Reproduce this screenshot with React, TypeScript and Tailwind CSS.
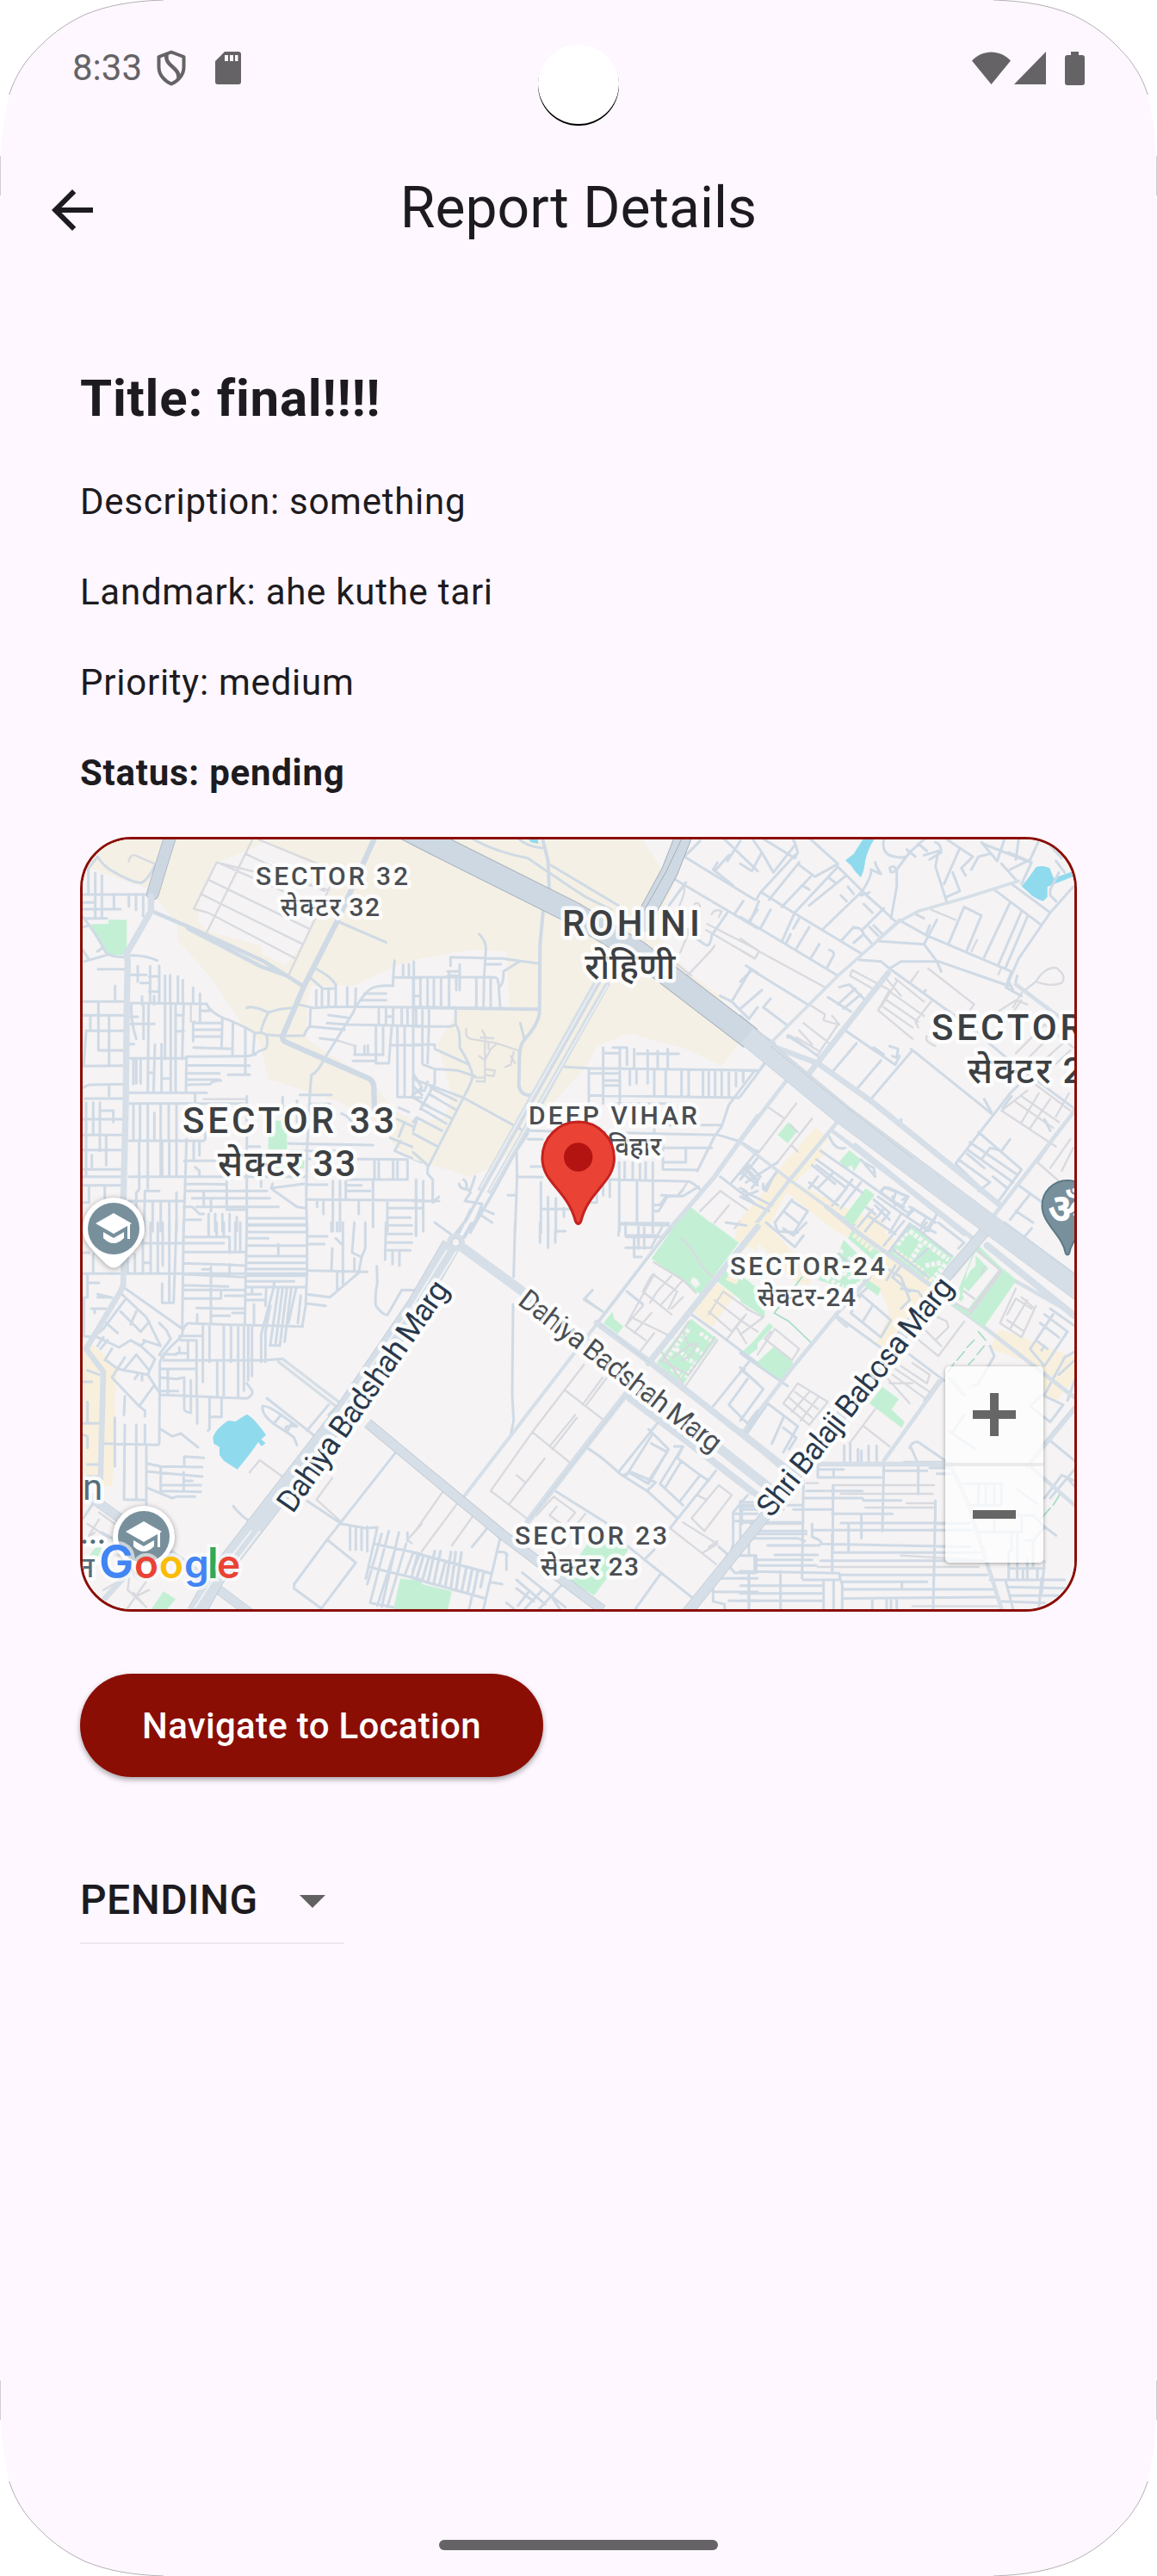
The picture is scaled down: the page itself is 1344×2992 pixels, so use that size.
import React from "react";
import { MdArrowBack } from "react-icons/md";

const FONT = "font-['Roboto','Noto_Sans',sans-serif]";

type Layer = { d: string; w: number; c: string; dash?: string };

const LOCAL = "#cfdae5";
const AVENUE = "#d6dfe7";
const LANE = "#d8dadf";
const PARK = "#c3f0d5";
const WATER = "#90daee";
const SAND = "#f4f0e5";
const SHOP = "#f8f0dd";
const LAND = "#f5f3f4";

/* Every tile is drawn at three units per pixel. */
const Tile = ({ x, y, fills, layers }: { x: number; y: number; fills: { d: string; c: string }[]; layers: Layer[] }) => (
  <g transform={`translate(${x} ${y}) scale(0.33333)`} fill="none" strokeLinecap="round" strokeLinejoin="round">
    {fills.map((f, i) => (
      <path key={`f${i}`} d={f.d} fill={f.c} />
    ))}
    {layers.map((l, i) => (
      <path key={`l${i}`} d={l.d} stroke={l.c} strokeWidth={l.w} strokeDasharray={l.dash} strokeLinecap={l.dash ? "butt" : "round"} />
    ))}
  </g>
);

const northWest = {
  fills: [
    {
      c: SAND,
      d: "M10 0V120H60L180 165Q260 185 270 215L350 310V365L450 480L580 665L635 720L665 850L900 925L1060 1010L1110 1090L1200 1140V1005L1110 965L1050 890L1000 835L870 760L800 710V590L815 525H960L1110 455L1200 430V0Z",
    },
    { c: LAND, d: "M485 95L600 50L650 25L860 120L880 190L790 370L725 455L645 415L640 385L455 335L420 300L425 230Z" },
    { c: PARK, d: "M45 310H108V295H172V405L160 418H115L100 405Z M690 995H730V1095H665V1035H690Z M680 1160L760 1120H790V1162Z" },
  ],
  layers: [
    {
      w: 7,
      c: LANE,
      d: "M485 95L405 257L455 270L760 430 M485 95L870 190 M585 65L860 195 M610 15L450 340 M455 155L805 325 M430 205L785 380 M500 100L840 250 M630 15L875 115 M880 180L735 490 M178 92Q185 65 200 70L270 100 M440 920H590V990 M395 590V650H410 M905 715L970 735",
    },
    {
      w: 9,
      c: LOCAL,
      d: "M38 120V205 M62 132V285 M85 140V290 M18 207H250 M18 235H55 M18 258H150 M18 290H102 M127 207V258 M179 207V248 M204 205V260 M229 207V282 M35 120L70 75Q90 110 130 130Q200 170 225 165Q250 150 270 105 M18 285Q50 320 100 410Q115 425 165 425 M18 320L40 315 M18 400L38 430 M25 440Q60 430 110 415 M70 405L88 392 M175 420Q230 415 278 437 M72 467H165 M131 525V580 M18 580H165 M180 585L450 588 M185 487H240 M210 457V510 M220 515H245 M253 457V580 M285 455V585 M250 492H285 M250 545H285 M305 490V585 M323 488V585 M350 492V585 M367 505V585 M403 532V588 M427 552V650 M225 562V590 M267 560V590 M73 585V750 M18 628H165 M45 628V675 M110 632V800 M30 682H165 M30 682L22 800 M18 805L160 803 M75 750H160 M18 880L40 870L160 868 M110 870V908 M25 918H160",
    },
    {
      w: 9,
      c: LOCAL,
      d: "M185 658H268 M180 633H210 M188 590Q185 650 205 710 M230 595V710 M248 585L245 895 M305 590V780 M325 590V895 M342 590V895 M370 585L365 780 M345 683H370 M345 628H370 M180 728H197 M182 778H380 M205 780V865 M195 782V868 M220 780V865 M245 828H265 M270 730L265 898 M293 728V898 M295 848H320 M380 772L378 895 M180 898H450 M410 900V932 M180 935H590 M403 655V718 M405 655H505 M403 678H500 M403 702H500 M505 635L502 742 M405 740L540 745 M542 650L540 770 M585 670V835 M380 772L580 770Q610 770 620 760 M380 802L600 803 M378 830H495 M525 835H600 M380 852H495 M500 855Q470 855 462 868L380 870 M427 612H460 M450 588Q460 615 510 638Q560 655 620 690Q650 685 660 700Q665 735 655 745Q620 755 620 765 M617 690L612 765 M655 695L715 700L790 698Q795 680 810 665L812 605 M590 602Q610 592 665 618Q700 605 745 602 M665 618Q650 645 640 680",
    },
    {
      w: 9,
      c: LOCAL,
      d: "M770 590L820 602L900 598L1200 600 M905 300L1075 373 M830 465Q880 490 900 520V598 M815 500L855 535H900 M832 540V598 M852 540V598 M875 540V598 M940 530V598 M970 535L968 598 M1105 437L1100 495L1200 497 M1135 452V495 M1155 450V495 M1100 495V525Q1030 520 1010 545Q970 590 960 620L860 780Q835 830 815 835L810 900L800 1100L797 1270L800 1380 M875 627L945 637 M870 655L940 660L1200 665 M810 667L930 678 M845 708L905 715 M985 575H1075 M1000 552H1075 M1050 603V655 M1075 605V655 M1100 600V665 M1075 632H1100 M1130 600V665 M1150 600V665 M1040 665V795H1085L1095 665 M1065 668V765 M1115 665V912 M1140 670V912 M1170 500V830 M1090 732H1200 M965 765H1065 M960 787H1040 M967 735V765 M1000 735V760 M1012 733V760 M1115 912L1200 915 M1120 950L1155 965 M1170 830L1200 880 M1170 830V900 M1165 910L1200 880",
    },
    {
      w: 9,
      c: LOCAL,
      d: "M775 905H885 M810 937H880 M440 1065H180 M445 1060V1030 M20 990H155 M20 1045H155 M20 1097H155 M30 932V1190 M55 932V1045 M78 932V1100 M125 960V1000 M80 960H125 M50 1115V1160 M100 1045V1150 M20 1165H155 M20 1190H155 M20 1220H155 M40 1220V1280 M95 1220V1280 M18 1280H40 M195 940V1060 M218 940V1060 M245 940V1230 M268 968V1060 M290 940V1185 M318 940V1060 M345 940V1185 M180 1190H800 M380 1060L370 1380 M405 1065V1135 M425 1070V1115 M372 1135H490 M295 1065V1190 M320 1065V1190 M215 1060V1235L205 1245V1380 M235 1240H285 M235 1240L232 1380 M262 1275V1380 M290 1280V1380 M320 1275V1380 M345 1245V1380 M180 1275H370 M375 1215L520 1217 M375 1240H660 M400 1265H670 M415 1295H700 M410 1157L425 1170V1190 M520 1195V1305H590 M440 1245V1290 M465 1265V1310 M590 910V1380 M590 1085H635 M590 1110H605V1190 M715 912V990 M765 925V1000 M640 1195V1225 M680 1215L675 1230L790 1215 M680 1235L765 1295L795 1300 M590 1335H795 M590 1357H795 M735 1075L1030 1080 M740 1100H900 M800 1127L1150 1130 M800 1270L1200 1273 M860 1130V1190 M803 1218H870 M890 1205V1380 M915 1205V1380 M935 1205V1270 M1050 1130V1200 M1035 1130V1200 M1100 1130V1200 M1115 1130V1200 M1150 1130V1200 M940 1200H1150 M940 1220H990 M940 1240H1020 M1030 1200V1365 M1080 1275V1380 M835 1275V1295 M857 1275V1320 M980 1275V1320 M1180 1205V1270 M1080 1300H1200 M1080 1333H1160 M370 1295H400L425 1320H440 M370 1340H430 M457 1320V1380 M480 1320V1380 M505 1320V1380 M530 1320V1380 M555 1330V1380 M920 970Q950 980 960 1010 M1115 990L1200 1030 M1090 1055L1200 1100 M1120 1050L1140 1000 M1105 1100L1125 1065 M1105 1100Q1150 1120 1200 1140 M1170 1000L1180 985",
    },
    { w: 14, c: LOCAL, d: "M260 265L400 325L650 440L785 525 M385 325L640 458L730 490" },
    { w: 19, c: LOCAL, d: "M1040 0L905 300L790 525L715 700Q710 715 735 725L860 780L1015 848Q1035 858 1033 890L1035 960" },
    { w: 44, c: "#adb6c0", d: "M328 -10L300 80L262 205" },
    { w: 39, c: "#ccd7e2", d: "M328 -10L300 80L262 205" },
    { w: 22, c: AVENUE, d: "M256 215V265L170 415L175 440L172 580L168 950L160 1270V1390" },
  ],
};

const north = {
  fills: [
    {
      c: SAND,
      d: "M0 0H790L870 125L905 180L880 240L840 330L900 410L960 480L1070 560L1140 720L1075 803L950 745L750 690L640 735L600 810L490 930L385 1060L290 1150L200 1190L0 1130V1005L110 985L135 910L85 730L155 610H335L325 405L200 400L0 435Z",
    },
    { c: WATER, d: "M395 5H435V30L410 25Z" },
    { c: PARK, d: "M968 1297L1080 1385H890Z" },
    { c: SHOP, d: "M1200 1290L1120 1385H1200Z" },
  ],
  layers: [
    {
      w: 7,
      c: LANE,
      d: "M185 675Q180 705 200 710L290 725L365 750 M240 680Q255 700 250 720V860 M235 705L280 708 M262 722V745 M290 728L270 745L250 785L230 770 M350 755L340 800L320 808 M218 845H250 M250 815L285 820L280 840L250 835 M220 858H250 M340 770L355 795 M1025 310L1200 400 M1020 330L1190 430L1200 415 M955 490L1040 400L1050 385 M920 450L970 490 M930 410L990 270 M940 180Q960 190 900 300L1000 350 M1040 275Q1050 255 1075 265L1065 285 M980 240Q995 230 1000 250 M1070 1240L1170 1310L1120 1370 M1070 1240L1000 1310 M1050 1350L1100 1290 M955 1210L940 1235",
    },
    {
      w: 9,
      c: LOCAL,
      d: "M210 15Q290 60 400 80Q500 150 600 215L690 260 M370 15Q400 40 450 45 M480 105L715 245 M230 345Q255 370 253 400L247 495L245 600 M130 455V425L310 430L440 448 M370 440L315 475Q315 520 300 530L293 500Q290 495 270 495H0 M250 450H305 M162 450V540 M120 490H160 M120 475H160 M125 475V595 M150 500V540 M25 500V600 M50 500V600 M72 500V600 M97 500V600 M220 500V600 M270 500V600 M298 530L303 600 M0 560H20 M2 440V610 M10 610V660 M32 610V795 M55 610V660L50 795 M148 610V660Q165 680 162 740Q200 800 208 840Q200 870 180 905L50 1160V1180L68 1200V1280L90 1260 M0 667H130L148 660 M0 730H75V745L195 800 M35 800L75 815L155 820L215 840 M75 815V865L25 955 M373 655L388 712 M0 850L175 915L385 1030 M0 900L20 890L40 890L50 860 M0 875L30 905 M60 880L150 925 M60 905L145 955 M30 935L130 985 M30 955L115 1005 M0 915L55 945 M0 1040L85 1085 M15 985L100 1030 M15 985L0 1030 M0 1105L50 1150",
    },
    {
      w: 9,
      c: LOCAL,
      d: "M530 808L610 812L1200 820 M612 812V940 M662 740V935 M665 760H720 M695 740H745V800 M770 745V810 M720 745V935 M780 762H925 M817 750V865 M852 752V810 M887 745V810 M755 815V870 M778 815V865 M615 830H715 M662 855H715 M662 872H715 M612 907L1135 915 M840 815V910 M880 820V910 M935 820V910 M960 820V910 M1010 820V910 M1030 820V910 M1052 820V910 M1075 820V910 M1100 820V910 M1125 820V875 M1150 820V855 M1190 820L1100 940L1075 1015L1050 1050L990 1170 M700 935H900 M850 1010H1075 M400 1030L1065 1045L1140 1068L1200 1105 M400 1060H450 M840 1010V1040 M870 1050V1165L990 1167 M870 1090H1040 M950 1095V1140H875 M400 1040L360 1100L362 1185L355 1385 M410 1155H445 M365 1190L450 1192 M690 1200L960 1207Q975 1210 1000 1235 M718 1140V1380 M737 1140V1200 M765 1140V1200 M790 1140V1200 M810 1140V1200 M835 1140V1385 M780 1205V1350 M445 1210V1385 M470 1260V1385 M445 1303H550 M497 1265V1385 M525 1300V1330 M640 1235V1280H620 M662 1205V1255 M685 1200V1260 M718 1352H890 M835 1290L860 1288L885 1255 M835 1310H855L885 1260L920 1258L940 1235 M865 1255L940 1258L995 1225 M330 1255H360",
    },
    {
      w: 9,
      c: LOCAL,
      d: "M1000 20L945 75L1190 225 M1100 70L1055 120 M1060 95L1045 120L1115 175 M1140 20L1095 90 M1080 10L1200 125 M905 150L1200 325 M950 165L895 240L870 280L1015 380Q1035 395 1040 350L1095 270 M1150 230L1120 275 M1200 260L1170 300 M1160 455L1200 480 M1175 470L1110 580L1070 560 M1110 580L1170 640L1200 600 M1070 1190L1200 1290 M1200 1100L1110 1210 M1160 1160L1200 1200 M1150 1180L1200 1220 M1200 1240L1150 1260 M160 1215Q160 1235 200 1235L215 1190 M175 1200Q190 1210 185 1230L200 1245L180 1275L240 1285L230 1320L275 1350 M235 1300L280 1320 M200 1305L160 1385 M0 1275H90 M10 1200V1385 M35 1205V1380 M240 1285L200 1385",
    },
    { w: 12, c: LOCAL, d: "M450 10L470 90L475 215 M455 240L442 380L440 620Q435 660 390 710Q370 730 370 780L368 870Q370 905 410 907 M0 600L435 607" },
    { w: 16, c: AVENUE, d: "M1200 980L1050 1190L870 1400" },
  ],
};

const northEast = {
  fills: [
    { c: WATER, d: "M430 10H470Q445 45 435 90Q432 125 420 147Q400 130 385 105L366 88L395 65Z M980 178Q1005 150 1030 112Q1050 102 1078 115L1092 150L1175 120V138L1070 180V215L1055 230Q1020 218 1005 200Z" },
    { c: SHOP, d: "M262 1018L310 1060L280 1085L300 1105L190 1210L350 1290L520 1370L500 1385H340L160 1245L90 1385H0V1340L75 1250L150 1145Z" },
    { c: PARK, d: "M168 1000L200 1030L165 1073L130 1045Z M380 1098L422 1132L395 1172L388 1150L370 1160L345 1137Z M435 1232L467 1255L390 1355L358 1335Z M590 1350L625 1380H570Z" },
  ],
  layers: [
    {
      w: 7,
      c: LANE,
      d: "M0 360L65 405L50 430L0 400 M65 405L295 530 M100 950L150 985 M195 935L65 1105 M250 988L125 1145 M178 1080L200 1103 M200 1035L175 1010 M390 470L520 540L480 610L600 710 M390 470L382 490L470 540 M500 490L560 560 M540 500L640 580 M520 545L640 630 M545 510L490 600 M510 575L620 650 M500 600L600 670 M665 580L610 650L620 670 M620 475L595 510 M655 465L815 590L800 610 M240 590L295 625L290 645L340 660L270 765 M220 655L310 725 M205 680L250 730 M195 705L270 750 M320 630L345 660 M1030 510L980 550L950 600 M1030 510Q1060 460 1100 462Q1140 490 1120 515Q1080 530 1030 510 M960 575L890 620 M980 575L920 660 M960 575L1000 590 M665 260L750 295 M825 365L805 405 M910 460L900 485 M650 700Q640 720 680 735 M960 760L1060 660L1160 740 M1000 780L1080 700 M1040 800L1130 720 M1080 815L1150 750 M980 910L1110 1000 M960 930L1090 1020 M1000 890L910 960 M1040 900L980 1000 M1080 920L1010 1020 M910 960L1100 1085 M1030 870L1150 960 M1145 900L1100 980 M1120 1020L1035 1140L1150 1240 M1150 1060L1080 1160 M1160 1090L1120 1170",
    },
    {
      w: 9,
      c: LOCAL,
      d: "M40 10L75 60L40 125L0 100 M75 60L115 130L190 35 M75 10L190 80L200 60Q190 20 180 10 M190 70L70 200L55 225 M240 10L340 100L260 145L200 100 M205 95L100 225 M245 145L145 250 M340 110L190 270 M370 140L240 245 M75 200L185 270L425 415 M0 285L340 490 M65 230L35 300 M105 260L70 325 M185 280L145 370 M205 290L185 325 M240 320L195 395 M175 345L160 375 M275 380L245 430 M310 400Q330 405 325 420L300 465 M395 320L350 370 M390 325Q420 315 430 345L395 375 M430 345L460 380 M450 320L480 350 M465 315L495 345 M430 325L500 255 M425 195L285 330 M345 115L425 195L540 300 M425 195Q460 140 455 120L490 135L475 110L470 95 M440 210L480 245 M430 240L460 270 M420 210L450 200 M350 210L370 230 M375 180L395 205 M215 175L240 190 M310 150L330 165 M500 15Q490 70 540 75Q580 85 590 60L640 15 M590 60L545 120V180L525 290 M520 115Q535 100 545 125L525 130L520 115 M640 70L690 55 M690 55L680 110L720 235 M680 25Q700 30 700 60L660 85 M580 50L610 75 M620 30L650 55 M720 15L810 75L770 115L785 140 M765 45L710 170 M740 130L765 195L720 215 M870 65L830 75L805 120 M840 25L870 60L895 90L920 15 M845 30L1010 95 M970 15L960 85 M935 60L1015 95L980 170 M910 100L960 155 M940 120L1010 85L1045 10 M1060 15L1120 80 M1100 90L1130 130",
    },
    {
      w: 9,
      c: LOCAL,
      d: "M945 170L1080 270 M885 190L1045 310 M1160 180L1080 270L970 430L935 510L950 540 M1110 130L1080 190V210L1100 230 M940 235L850 425 M980 265L900 450 M1000 285L925 460 M780 250L725 380 M780 250L840 280L790 400 M485 370L640 380L685 440L700 475 M685 295L640 380 M560 300L650 350L945 475 M415 435L490 440L520 465L560 440L690 440L935 525 M520 465L790 660L920 770L1160 950 M640 550L645 540 M610 275L640 290 M660 315L650 340 M945 475L925 530L950 545L980 560 M965 490L960 510 M595 745L875 970 M850 920L875 965 M595 755L455 920 M365 680L540 800L555 770 M520 735L550 745L545 775L530 770 M465 740L500 765 M405 725L325 820 M490 785L410 880 M0 510L40 470L235 590 M0 605L75 540 M105 570L80 600L160 660 M0 630L80 700L120 725 M440 580L380 520L345 530 M305 565L385 615 M340 590L400 535 M360 605L420 555 M165 705Q160 690 190 710L270 770 M230 740L165 700 M0 820L65 822L90 785 M10 822V860 M0 910L90 790 M560 990V1000 M750 1145L940 900L1000 840 M830 1035L980 1165L900 1275 M800 1070L960 1180 M790 1095L950 1210 M940 1060L910 1100L870 1090L840 1130 M760 1130L870 1210L830 1240 M790 1110L850 1160 M880 1190L930 1230 M755 1150L900 1290 M1160 960L1200 1000 M945 910L915 950 M1060 990L1080 1030 M970 1220L1080 1300 M1010 1250L940 1340 M960 1310L1020 1350",
    },
    {
      w: 9,
      c: LOCAL,
      d: "M0 1200L60 1125 M0 1180L30 1150L70 1190L40 1230 M20 1170L60 1210 M0 1230L20 1240 M0 1260L100 1310 M20 1210L130 1140 M80 1215Q75 1235 90 1240L120 1180 M10 1240L110 1290 M130 1170L85 1230 M310 1050Q330 1100 365 1090 M280 1100L410 1190L590 1320 M265 1150L370 1230L320 1290 M250 1150L330 1215 M240 1210L340 1290 M270 1190L240 1230 M320 1180L270 1230 M265 1130L430 1250 M390 1200L340 1270 M420 1210L350 1300 M420 1130L470 1190L465 1160L430 1140 M180 1270L120 1350L130 1380L200 1385 M180 1275L235 1310L190 1380 M150 1310L200 1350 M320 1310L440 1385 M490 1240Q510 1220 530 1235L585 1260L570 1285 M480 1260L580 1330L600 1310 M530 1260L540 1290 M430 1290L470 1320L440 1350 M470 1290L520 1340 M600 1300L680 1350 M650 1330L630 1360L680 1385 M680 1330L640 1385 M500 1300L450 1370 M560 1320L520 1385",
    },
    { w: 11, c: AVENUE, d: "M970 160L780 220L620 265L555 300L340 490L110 720 M555 295L480 365 M0 1070L170 1200L420 1380" },
    { w: 14, c: AVENUE, d: "M180 830L0 1065 M350 985L165 1210L20 1400 M320 1030L540 1200L780 1390 M340 1045L560 1210 M960 520L1120 640 M1165 960L880 1330" },
    { w: 20, c: AVENUE, d: "M515 480L240 830 M110 735L270 795L460 930L900 1285" },
  ],
};

const southWest = {
  fills: [
    { c: SHOP, d: "M18 420L60 430L140 510L130 620L135 740L120 918H80L25 885Z" },
    { c: WATER, d: "M472 750Q480 720 525 690L550 693L590 668Q615 680 657 740L640 755L655 768L642 780L630 765Q600 810 557 860L510 830L495 810V782L475 770Z" },
    { c: PARK, d: "M60 1135L85 1130V1160L35 1170Z M300 1285L342 1312L310 1350H255Z M1125 1240L1200 1250V1350H1100Z" },
  ],
  layers: [
    {
      w: 7,
      c: LANE,
      d: "M600 870L635 828L735 900 M888 890L833 965L915 1040 M1200 1050L1150 1105L1165 1118 M35 1050L110 1100 M75 1035L40 1090 M20 1110L60 1080 M90 1280L180 1230 M180 1240L175 1280L240 1340 M195 1290L230 1330 M140 1060L130 1110 M170 1350L240 1250 M200 1305L250 1280 M75 1010L130 1050",
    },
    {
      w: 9,
      c: LOCAL,
      d: "M18 178H800 M18 105H40 M35 180V260L22 262V395 M35 210H75 M70 260H110 M70 250L120 262 M48 300H98 M60 300V315 M55 110V178 M160 225L365 370 M175 115V178 M200 110V178 M228 60V178 M255 0V178 M280 0V178 M297 0V150 M320 0V280 M345 0L335 280H295V212 M225 72H510 M230 140H255 M370 0L365 370 M370 50H530 M370 103H580 M457 0V50 M485 0V50 M510 0V50 M550 0V103 M567 0V103 M530 50V105 M590 0L583 355 M590 10H797 M590 33H797 M590 55H665 M590 80H797 M590 117H800 M590 140H797 M590 162H797 M590 185H797 M700 75V117 M800 0V178L795 290L783 362 M370 142L530 147L580 150 M370 180L580 190 M435 163H465 M465 155V350 M530 145V185 M370 218L525 223 M370 235H580 M370 265H500V240 M515 255H580 M585 205H755 M585 225H795 M685 205V225 M585 250H640 M608 225V250 M585 270H655 M658 225L655 290 M415 298L580 300 M417 320V350 M465 325H530 M540 315H580 M683 230L640 390V485 M672 290L655 380V485 M700 228L672 425 M715 228L690 425 M730 228L705 430 M745 228L722 415 M762 228L735 350 M778 255L768 350 M670 428H700 M615 285V350 M797 250L880 260L980 175 M800 282L865 290 M805 167L1010 172 M905 170V235 M925 0V215 M965 125V170 M805 48H870 M805 75H860 M885 30V0 M905 30V0 M900 55L920 75 M888 90L885 165 M965 0L957 105L990 120L1003 90V0 M990 120L980 175 M1075 0L1072 130 M1075 10H1165 M1075 40H1165 M1075 70H1165 M1075 97H1160 M1098 97V145 M1122 97V150 M1180 0V45 M1030 0V15",
    },
    {
      w: 9,
      c: LOCAL,
      d: "M370 370Q380 345 400 352L785 362 M365 370Q370 390 355 405Q280 470 287 500L285 770 M437 360V555 M355 395H430 M360 410H415V600 M460 360V485 M510 360V605 M535 360V485 M560 360V605 M580 360V585 M595 360V550 M608 365V535 M300 480H650L715 475 M345 455H385V480 M355 435V455 M385 415V480 M300 458L345 460 M290 510H415 M315 510V600 M290 540L345 545L372 540V650Q375 662 395 662V550 M290 600L590 613Q615 600 608 585L590 560 M290 587H350 M487 485V605 M417 605V700 M460 610V720L455 725 M462 677H502V610 M95 770L282 775 M240 780V980 M165 705L162 965L235 967 M205 705V965 M235 705V770 M130 680V850 M165 605L162 670 M290 720L330 745L360 735L420 783 M245 840L290 850L435 852 M372 850V815L440 820 M245 868L435 885 M290 850V935 M290 915H430 M290 935L430 938 M370 870V935 M245 925L330 960L345 955H410 M370 900H400 M543 988Q570 1025 615 1050 M645 640Q660 635 710 670L765 710Q690 700 755 750L765 775 M645 640Q640 670 690 705L750 745 M710 670L685 700 M745 700L730 730 M660 612L810 730L840 755 M875 635L800 725 M905 640L875 670 M18 555H50 M35 515L75 530 M20 740L35 745V785 M35 625V700H80 M20 700H80 M35 843H80 M35 885H75 M50 985L20 1030 M85 1080L160 1120",
    },
    {
      w: 9,
      c: LOCAL,
      d: "M155 250L240 330L250 350L290 430L230 410 M165 270L90 370L60 395 M150 310L220 380L250 345 M205 310L185 355 M100 350L140 385 M285 350L310 375L325 405L285 460L300 470 M60 395L145 435L185 410L220 430L235 415 M105 410L80 440 M90 400L70 430 M95 480L120 440 M100 480L140 510L245 530L270 475L215 425 M205 460L160 515 M205 460L250 515 M165 470L120 540L215 640L235 655V675 M245 530L290 600 M265 570L215 640 M210 530L200 545 M225 530V550 M20 395L60 400 M1043 152L1045 210Q1035 260 1040 290Q1060 320 1080 322L1130 235L1200 236 M800 970L920 1050 M1110 800L870 1105L755 1260V1275L850 1345L970 1185L870 1105 M920 1050L1005 1065L1045 1062L1005 1240 M950 1060V1140 M970 1060V1140 M990 1065V1140 M1010 1060V1145 M1035 1120L1200 1155 M1015 1200L1200 1245 M1085 1075L1020 1325 M1120 1080L1060 1340 M1145 1120L1080 1340 M1060 1085L1010 1260 M1150 1110V1080 M1110 1130L1045 1335 M1170 1150L1140 1230 M1185 1155L1165 1235 M1020 1325L1100 1340",
    },
    { w: 10, c: AVENUE, d: "M715 475L930 640 M700 485L920 655" },
    { w: 20, c: AVENUE, d: "M160 0V215L150 240L30 440L90 520L80 900" },
    { w: 34, c: "#c9d1d9", d: "M50 960L480 1270L600 1360" },
    { w: 30, c: AVENUE, d: "M50 960L480 1270L600 1360" },
    { w: 20, c: AVENUE, d: "M95 1310L230 1160 M405 1350L480 1250" },
  ],
};

const south = {
  fills: [
    { c: PARK, d: "M920 0H1040L1135 70L1000 250L830 125Z M1080 165L1200 230V315L1060 205Z M695 310L700 335L733 362L712 388L663 350Z M968 335L1058 405L940 565L848 488Z M1200 400V440L1165 465L1148 450Z M640 1070L750 1140L630 1300L530 1235Z M0 1252L135 1285L120 1350H0Z" },
    { c: SHOP, d: "M1135 0H1200V100L1140 70L1120 60Z M1060 210L1120 255L1040 365L975 310Z M1100 180L1135 200L1125 215L1090 200Z" },
    { c: LAND, d: "M975 190L990 198L1000 215L985 228L966 208Z" },
  ],
  layers: [
    { w: 15, c: LAND, dash: "13 7", d: "M960 372L872 488 M900 508L935 535 M1000 385L1040 415 M945 470L985 490L950 540 M985 440L1010 460 M915 440L950 465" },
    {
      w: 7,
      c: LANE,
      d: "M935 55Q965 80 990 125Q1010 165 1045 190 M838 138L940 200L985 245 M840 180L740 360 M830 185L800 240 M900 185L850 240L825 280 M940 200L860 290 M835 180L920 240L890 300 M800 240L900 320 M940 260L900 300 M800 290L740 360L810 410 M830 315L770 385 M770 335L905 400 M840 385L790 450 M595 495L415 730L270 935L395 1030 M530 585L660 685 M660 540L590 635 M675 540L600 640 M565 670L475 780 M570 680L485 790 M415 730L545 835 M458 822L335 980 M360 880L390 905 M105 935L0 1085 M160 970L30 1145 M210 1020L135 1125 M490 955L430 1020 M490 955L565 1010L540 1040 M500 990L475 1020L550 1075L600 1015 M1065 915L970 1030L1015 1075L1110 950L1065 915 M940 1045L1060 1120L1010 1150 M990 950L1020 965 M1060 1110L1030 1130 M895 1065L1055 1190 M865 450L940 560 M960 345L870 480 M1050 400L960 530L860 480 M940 380L960 430L990 420L970 460L940 480 M905 470L970 425 M1060 410L945 575 M1030 320L1080 240 M1080 240L1180 310 M1050 270L1140 340 M1030 310L1110 380L1150 330 M1160 320L1090 410 M1130 370L1160 420 M600 265L660 310 M700 1080L630 1080",
    },
    {
      w: 9,
      c: LOCAL,
      d: "M10 0V45 M75 0L130 40 M210 0L180 50 M355 0L350 190 M348 285L345 600L350 690L340 740 M442 0V70 M470 0V88 M495 70V30H530 M715 45L720 5L890 10 M740 0V45H850 M742 50L870 50 M770 50V120H795 M785 10V90 M805 10V90 M740 88H830 M870 10L830 85 M1090 0L1160 10 M625 235L595 268L660 310 M745 240L800 285 M970 320L1060 385L1200 490 M1045 640L1170 485 M1145 515L1200 560 M1165 545L1100 635L1165 700L1200 655 M1150 740L1200 670 M820 720L890 790L820 910L750 870 M850 700L715 870 M835 735L740 885 M830 770L885 800L820 900 M605 785Q650 810 720 875L815 935L920 1030 M730 880L760 870L845 905L815 935 M910 780L940 780L860 910L940 985 M940 780L920 820L1000 880L930 970 M1000 880L1030 900 M1055 865L895 1065 M880 920L935 830 M495 935L670 1045 M670 1045L750 1130L970 1305 M865 1220L775 1345 M840 1140L810 1170 M270 1050L205 1130 M1165 950L1115 1010V1120L1095 1190L1120 1220H1190V1160H1120 M1140 970V1100 M1140 975H1200 M1130 990H1200 M1115 1015H1200 M1120 1040H1200 M1065 1130L1100 1160L1110 1180 M1050 1240H1200 M1045 1245V1320L1085 1330V1345 M1050 1287H1200 M1100 1318H1200 M1170 1240V1345 M325 1155V1210 M295 1148Q325 1145 328 1160 M305 1090L245 1345 M270 1253L310 1260 M380 1220L530 1340 M360 1245L460 1330 M360 1275L420 1320 M325 1325L350 1345 M520 1260L440 1345 M450 1280L390 1345 M400 1290L365 1335 M480 1300L510 1345 M205 1300L195 1345",
    },
    {
      w: 10,
      c: LOCAL,
      d: "M0 1150L270 1222 M0 1240L245 1308 M20 1160L0 1210 M35 1165L12 1240 M55 1165L32 1245 M75 1145L52 1250 M95 1145L72 1255 M112 1180L92 1260 M132 1148L112 1265 M148 1148L132 1270 M168 1150L150 1275 M185 1205L170 1280 M205 1210L190 1285 M225 1215L210 1290 M245 1222L235 1270",
    },
    { w: 12, c: AVENUE, d: "M910 0L650 340L180 950" },
    { w: 22, c: AVENUE, d: "M1200 15L820 490 M740 600L600 780L400 1040 M640 350L830 490L1200 780 M740 600L940 750L1200 950" },
    { w: 2, c: "#c3ced9", d: "M735 610L595 790L405 1035 M655 355L825 490 M745 620L940 765L1180 950 M900 20L645 345" },
  ],
};

const southEast = {
  fills: [
    { c: SHOP, d: "M0 0H90L250 180L240 220L180 200L120 130L50 60L0 110Z M330 20L440 20L520 95L660 230L560 410L520 450L475 420L520 310L490 240L420 190L510 150Z M900 370L1165 470V550L1100 620L1060 600L1050 500L870 440Z" },
    { c: PARK, d: "M10 190L85 250V330L0 275Z M100 350L115 362L20 465L10 455Z M120 430L185 490L140 555L55 490Z M430 190L490 230L480 255L422 215Z M390 25L480 105L450 110L380 55Z M360 60L410 110L380 160L420 200L370 230L270 200L340 110Z M495 572L552 615L527 652L573 695L562 715L450 630Z" },
  ],
  layers: [
    { w: 14, c: LAND, dash: "12 8", d: "M355 95L290 190 M385 120L340 200 M330 150L390 200 M300 195L360 225" },
    {
      w: 7,
      c: LANE,
      d: "M0 390L80 330L20 300 M0 340L60 380 M105 380L85 405L180 480L205 440L120 370L60 460 M200 560L150 630L240 705L305 625L200 560 M190 590L270 650 M170 610L250 680 M240 590L180 660 M270 610L210 690 M470 650L380 770 M430 710L520 780 M680 325L720 345L725 365L680 410 M780 345L690 465L610 400 M640 370L700 430 M510 540L590 630 M540 510L660 590 M530 530L640 610 M560 500L650 560L660 530L600 490 M690 550L640 620 M600 560L520 560 M960 230L905 350L980 400L1030 290 M980 260L1020 295L1015 300L960 265L930 320 M1000 270L940 370 M930 340L990 380 M325 915H675 M325 925V960 M230 908H270 M350 945H670 M435 993H675 M580 978H675 M35 1050H210 M680 970V1050H800 M270 1200H830 M600 1337H900 M560 1160L810 1175",
    },
    {
      w: 9,
      c: LOCAL,
      d: "M90 0L190 85L220 45 M150 20L185 45L230 0 M0 455L165 570 M0 505L80 580L0 690 M95 630L20 740 M95 630L200 710L150 800 M150 680L110 770 M150 715L195 750L170 790 M0 520L15 510 M440 230L330 320L495 440 M420 250L525 340L490 400L385 315Z M460 290L430 340 M340 110L390 150 M510 160L560 190L590 270L560 300 M540 150L510 200 M560 230L620 240L640 270 M560 150L530 190L590 240 M650 0L610 45 M690 0L780 70L760 90 M920 0L1165 180 M1015 20L990 50 M590 460L710 550 M1080 300L1165 360 M1090 320L1010 440L1060 500L1140 380L1060 320 M1030 410L1070 440 M1045 350L1110 400 M1060 430L1050 445 M870 430L885 465L830 560L810 570 M1165 450L1130 470L1060 600 M1165 480L1110 530 M1165 550L1140 620 M1050 600L1125 635L1080 695L1010 640Z M1165 640L1050 780 M1080 760L1165 830 M1165 900L1120 880L1060 960 M1140 890L1165 920 M1080 960L1165 860 M780 910H910V985H800 M830 910V980 M855 910V980 M885 910V980 M965 930L1035 980 M740 730L780 670 M730 730L820 790 M1100 1090L1060 1060L1020 1110V1200 M980 1020V1080 M885 1020V1075 M850 1020H1020L1060 1060 M820 1078H980 M995 1108H1025 M945 1080V1140L935 1150V1240 M965 1080V1240 M1000 1175V1240 M1060 1180L1050 1290 M935 1205H1060 M985 1205V1240 M1035 1205V1240 M870 1245H1130 M930 1270L1160 1275 M940 1300H1110 M925 1250L950 1345 M910 1320L1060 1325 M1050 1240L1040 1345",
    },
    {
      w: 9,
      c: LOCAL,
      d: "M270 845H715 M270 860H360 M270 845V888H490 M325 860V885 M362 778V840 M383 770V845 M410 790V845 M422 795V845 M447 778V845 M475 778V845 M500 845L495 1075 M620 840V945 M590 785Q600 760 620 765L715 830 M595 785L620 840 M570 835H715 M505 865H650 M660 855H735 M685 875H740 M220 900L215 1240 M230 935H425 M225 960H425L430 968H560 M323 915L322 1140 M185 1000H320 M320 1015H530 M0 985H215 M0 1000H150 M0 1045H220 M350 1047H800 M250 1050V1095Q290 1110 280 1120L800 1130 M250 1072H810 M25 1075H230 M40 1085H230 M422 1020V1100 M377 1050V1150 M320 1085V1215 M30 1100H200L225 1110 M95 1125H275 M30 1100V1155 M0 1160H55V1220H0 M120 1158H270 M60 1175H250 M60 1195H265 M320 1150H840 M280 1178H850 M0 1215L345 1222Q345 1240 355 1260V1345 M220 1245H340 M345 1228H860 M355 1252H650 M290 1245V1345 M325 1245V1345 M140 1215V1345 M0 1265H285 M0 1292H285 M0 1318H285 M355 1278H880 M563 1255V1275 M355 1310L890 1305 M460 1310V1345 M510 1310V1345 M525 1310V1345 M545 1310V1345 M680 970L672 1345 M5 985V1050 M30 1220V1345 M0 1240H30",
    },
    { w: 5, c: "#a3dcc4", d: "M215 190L118 315L170 345L248 420 M815 410L790 435 M780 450L755 480 M745 490L725 520 M850 430L825 460 M815 475L795 495 M830 380L855 410 M1115 945L1090 985 M1080 995L1050 1030 M725 540L745 553" },
    { w: 14, c: AVENUE, d: "M370 360L330 325L170 520L10 730 M0 735L160 870 M700 550L500 830 M720 270L850 365L1165 610 M735 550L780 600 M735 850L790 970L910 1345 M450 190L330 325 M1165 650L1000 850 M270 840H740 M1165 320L960 205 M1010 850L1165 985" },
    { w: 24, c: AVENUE, d: "M860 80L1165 325 M0 730L190 880" },
  ],
};

/* Housing blocks and gardens around the Sector 24 crossing. */
const gardens = {
  fills: [
    { c: SHOP, d: "M150 232L205 275L190 300L240 330L205 365L95 285Z" },
    { c: PARK, d: "M140 152L167 172L90 283L60 262Z M290 268L445 388L365 492L210 378Z M90 297L200 385L185 420L75 325Z M525 345L618 435L495 595L425 548L455 515Z M618 432L663 470L548 635L498 598Z" },
    { c: LAND, d: "M520 370L600 435L490 575L440 540L475 520L490 440Z" },
    { c: PARK, d: "M520 385L565 430L520 480L495 510L475 490L500 440L520 420Z M460 505L480 530L470 545L450 530Z" },
  ],
  layers: [
    { w: 17, c: LAND, dash: "14 6", d: "M290 300L425 400 M280 305L245 350 M415 415L370 470 M330 345L295 400 M345 420L400 410" },
    { w: 18, c: SHOP, dash: "12 6", d: "M240 370L335 440 M345 455L370 475 M95 312L165 370 M125 330L150 350" },
    { w: 8, c: LANE, d: "M525 365L605 435L500 578L435 545 M610 440L500 590 M520 365L440 460 M550 425L540 450 M480 510L515 535" },
    { w: 9, c: LOCAL, d: "M285 290Q300 275 320 295L435 385 M280 295L225 360L355 460 M355 360L305 405 M210 150Q200 140 190 165L230 195L270 215 M210 150L285 180L265 190 M240 170L235 185 M165 190L220 235L195 265 M150 250L240 310 M270 265L200 350 M290 215L380 270 M300 220L280 250L355 300L385 240 M110 285L160 225 M135 300L175 250 M215 375L290 275" },
    { w: 16, c: AVENUE, d: "M100 0L305 165L510 325 M0 215L110 305L235 395L365 490" },
  ],
};

/* Trunk roads cross the tile seams, so they use page units. */
const trunks: Layer[] = [
  { c: "#bcc6cf", w: 9, d: "M529 1443L603 1497L833 1680L905 1737" },
  { c: AVENUE, w: 11, d: "M529 1443L603 1497L833 1680L905 1737" },
  { c: "#bcc6cf", w: 12, d: "M427 1653L480 1697L583 1782L700 1870" },
  { c: AVENUE, w: 10.5, d: "M427 1653L480 1697L583 1782L700 1870" },
  { c: "#c3ccd5", w: 13, d: "M1147 1427L1107 1473L887 1763L798 1873" },
  { c: AVENUE, w: 11.5, d: "M1147 1427L1107 1473L887 1763L798 1873" },
  { c: "#c3ccd5", w: 22, d: "M524 1446L484 1515L397 1643L297 1772L250 1833L228 1873" },
  { c: AVENUE, w: 20.5, d: "M524 1446L484 1515L397 1643L297 1772L250 1833L228 1873" },
  { c: "#f1f2f4", w: 2, d: "M519 1452L478 1519L391 1645 M292 1778L246 1837L226 1868 M531 1452L493 1514 M302 1778L258 1836" },
  { c: LOCAL, w: 3.5, d: "M698 1138L560 1383L540 1420 M708 1138L573 1385L548 1428 M539 1420L527 1436 M548 1420L537 1440" },
  { c: AVENUE, w: 6, d: "M694 1138L557 1383 M706 1142L568 1386" },
  { c: "#f5f3f4", w: 1.2, d: "M694 1140L558 1380 M706 1144L569 1383" },
  { c: "#aab2bb", w: 20, d: "M796 966L778 1012L742 1078" },
  { c: "#cfd9e3", w: 18, d: "M796 966L778 1012L742 1078" },
  { c: "#a5adb6", w: 1, d: "M792 974L774 1012L748 1058" },
  { c: "#a7b0ba", w: 27, d: "M470 962L505 980L667 1061L740 1105L872 1206" },
  { c: "#cdd8e2", w: 25, d: "M470 962L505 980L667 1061L740 1105L872 1206" },
  { c: "#c6cfd8", w: 24, d: "M868 1203L977 1293L1147 1420L1255 1500" },
  { c: "#d5dee6", w: 23, d: "M868 1203L977 1293L1147 1420L1255 1500" },
  { c: "#c3ccd5", w: 1, d: "M895 1215L977 1281L1060 1345" },
];

type LabelProps = { x: number; y: number; w?: number; size: number; color?: string; rotate?: number; weight?: number; children: string };

const Label = ({ x, y, w, size, color = "#3c4043", rotate = 0, weight = 500, children }: LabelProps) => (
  <text
    transform={`translate(${x} ${y}) rotate(${rotate})`}
    fontSize={size}
    fontWeight={weight}
    fill={color}
    stroke="#ffffff"
    strokeOpacity={0.85}
    strokeWidth={9}
    strokeLinejoin="round"
    paintOrder="stroke"
    textLength={w}
  >
    {children}
  </text>
);

const SchoolPin = ({ x, y }: { x: number; y: number }) => (
  <g transform={`translate(${x} ${y})`}>
    <path
      d="M0 -36A36 36 0 0 1 36 0C36 14 28 22 8 42Q0 49 -8 42C-28 22 -36 14 -36 0A36 36 0 0 1 0 -36Z"
      fill="#fff"
      style={{ filter: "drop-shadow(0 1px 3px rgba(0,0,0,.35))" }}
    />
    <circle r={30} fill="#78909c" />
    <path d="M0 -18L21 -6L0 6L-21 -6Z M-12 4L0 11L12 4V11Q6 17 0 17Q-6 17 -12 11Z" fill="#fff" />
    <path d="M17.5 -6V12" stroke="#fff" strokeWidth={3} />
  </g>
);

const MapDrawing = () => (
  <svg viewBox="96 975 1152 894" className={`block h-full w-full ${FONT}`}>
    <rect x={90} y={970} width={1170} height={910} fill={LAND} />
    <Tile x={90} y={970} {...northWest} />
    <Tile x={480} y={970} {...north} />
    <Tile x={860} y={970} {...northEast} />
    <Tile x={90} y={1420} {...southWest} />
    <Tile x={860} y={1420} {...southEast} />
    <Tile x={480} y={1420} {...south} />
    <Tile x={960} y={1330} {...gardens} />
    <g fill="none" strokeLinejoin="round">
      {trunks.map((t, i) => (
        <path key={i} d={t.d} stroke={t.c} strokeWidth={t.w} />
      ))}
    </g>
    <circle cx={529.5} cy={1443} r={7.5} fill={LAND} stroke={AVENUE} strokeWidth={6} />
    <circle cx={529.5} cy={1443} r={4.5} fill={LAND} stroke="#bcc6cf" strokeWidth={0.8} />

    <Label x={297} y={1028} w={177} size={30} color="#4a4e52">SECTOR 32</Label>
    <Label x={326} y={1064} w={115} size={30} color="#4a4e52">सेक्टर 32</Label>
    <Label x={212} y={1316} w={246} size={42}>SECTOR 33</Label>
    <Label x={253} y={1366} w={160} size={42}>सेक्टर 33</Label>
    <Label x={653} y={1087} w={160} size={42}>ROHINI</Label>
    <Label x={679} y={1137} w={105} size={42}>रोहिणी</Label>
    <Label x={614} y={1306} w={196} size={30} color="#4a4e52">DEEP VIHAR</Label>
    <Label x={657} y={1342} w={111} size={30} color="#4a4e52">दीप विहार</Label>
    <Label x={1082} y={1208} w={246} size={42}>SECTOR 22</Label>
    <Label x={1124} y={1258} w={160} size={42}>सेक्टर 22</Label>
    <Label x={848} y={1481} w={180} size={30} color="#4a4e52">SECTOR-24</Label>
    <Label x={880} y={1517} w={114} size={30} color="#4a4e52">सेक्टर-24</Label>
    <Label x={598} y={1794} w={177} size={30} color="#4a4e52">SECTOR 23</Label>
    <Label x={628} y={1830} w={114} size={30} color="#4a4e52">सेक्टर 23</Label>
    <Label x={340} y={1759} w={319} size={36} rotate={-55} color="#28384c" weight={400}>Dahiya Badshah Marg</Label>
    <Label x={600} y={1514} w={287} size={33} rotate={37.4} color="#4a4e52" weight={400}>Dahiya Badshah Marg</Label>
    <Label x={896} y={1764} w={343} size={36} rotate={-51.6} color="#28384c" weight={400}>Shri Balaji Babosa Marg</Label>
    <Label x={96} y={1742} size={42} color="#546e7a" weight={400}>n</Label>
    <Label x={93} y={1793} size={36} color="#546e7a">...</Label>
    <Label x={90} y={1832} size={34} color="#546e7a">न</Label>

    <SchoolPin x={132} y={1427} />
    <SchoolPin x={167} y={1785} />

    <path d="M1240 1371A29.500 29.500 0 0 1 1269.500 1401C1269 1422 1246 1434 1242 1456Q1240 1459 1238 1456C1234 1434 1211 1422 1210.500 1401A29.500 29.500 0 0 1 1240 1371Z" fill="#78909c" stroke="#5b7986" strokeWidth={2} />
    <text x={1217} y={1420} fontSize={48} fontWeight={700} fill="#fff">ॐ</text>

    <path d="M671.700 1303A42 42 0 0 1 713.500 1345C713.500 1374 684 1382 675 1418Q671.700 1425 668.400 1418C659 1382 629.900 1374 629.900 1345A42 42 0 0 1 671.700 1303Z" fill="#ea4335" stroke="#c5221f" strokeWidth={3} />
    <circle cx={671.7} cy={1344} r={16.7} fill="#b31412" />

    <text y={1833} className="font-['Inter','Roboto',sans-serif]" fontWeight={600} stroke="#fff" strokeOpacity={0.6} strokeWidth={8} paintOrder="stroke">
      <tspan x={115} fontSize={54} fill="#4285f4">G</tspan>
      <tspan x={156} fontSize={46} fill="#ea4335">o</tspan>
      <tspan x={185} fontSize={46} fill="#fbbc04">o</tspan>
      <tspan x={214} fontSize={46} fill="#4285f4">g</tspan>
      <tspan x={241} fontSize={49} fill="#34a853">l</tspan>
      <tspan x={252} fontSize={46} fill="#ea4335">e</tspan>
    </text>
  </svg>
);

const ZoomControls = () => (
  <div className="absolute right-[36px] bottom-[54px] flex h-[228px] w-[114px] flex-col rounded-[5px] bg-white/75 shadow-[0_1px_5px_rgba(0,0,0,0.35)]">
    <button className="flex flex-1 items-center justify-center border-b-4 border-[#e6e6e6]/80" aria-label="Zoom in">
      <svg viewBox="0 0 50 50" className="size-[50px]" fill="#666">
        <path d="M20 0H30V20H50V30H30V50H20V30H0V20H20Z" />
      </svg>
    </button>
    <button className="flex flex-1 items-center justify-center" aria-label="Zoom out">
      <svg viewBox="0 0 50 50" className="size-[50px]" fill="#666">
        <path d="M0 20H50V30H0Z" />
      </svg>
    </button>
  </div>
);

const Corner = ({ className }: { className: string }) => (
  <svg viewBox="0 0 240 240" className={`absolute size-[240px] ${className}`} fill="none">
    <path d="M0 0V205C1 160 5 135 10.700 110C17 90 28 72 43 57C57 42 75 28 98.600 17C125 6 155 1 195 0Z" fill="#fff" />
    <path d="M10.700 110C17 90 28 72 43 57C57 42 75 28 98.600 17C125 6 155 1 190 0" stroke="#000" strokeOpacity={0.5} strokeWidth={0.6} />
    <path d="M0 181V227" stroke="#000" strokeOpacity={0.35} />
  </svg>
);

const StatusBar = () => (
  <div className="flex h-[156px] items-start justify-between pt-[52px] pr-[84px] pl-[84px] text-[#656366]">
    <div className="flex h-[54px] items-center">
      <span className="w-[98px] text-[42px] leading-[54px]">8:33</span>
      <svg viewBox="0 0 34 42" className="h-[42px] w-[34px]" fill="none" stroke="currentColor" strokeWidth={4} strokeLinejoin="round">
        <path d="M17 2.500L31.500 8V20C31.500 29 25 36 17 39.500C9 36 2.500 29 2.500 20V8Z" />
        <path d="M11.500 5.500C9 19 27 20 25.500 33" strokeWidth={4.5} />
      </svg>
      <svg viewBox="0 0 30 38" className="ml-[34px] h-[38px] w-[30px]" fill="currentColor">
        <path fillRule="evenodd" d="M11 0H27Q30 0 30 3V35Q30 38 27 38H3Q0 38 0 35V11ZM11 4V11H15V4ZM17 4V11H21V4ZM23 4V11H26.500V4Z" />
      </svg>
    </div>
    <div className="flex h-[54px] items-center">
      <svg viewBox="0 0 45 38" className="h-[38px] w-[45px]" fill="currentColor">
        <path d="M0 10.500C12 -3 33 -3 45 10.500L22.500 38Z" />
      </svg>
      <svg viewBox="0 0 37 38" className="ml-1 h-[38px] w-[37px]" fill="currentColor">
        <path d="M37 0V38H0Z" />
      </svg>
      <svg viewBox="0 0 23 39" className="ml-[22px] h-[39px] w-[23px]" fill="currentColor">
        <path d="M7 0H16V4H20Q23 4 23 7V36Q23 39 20 39H3Q0 39 0 36V7Q0 4 3 4H7Z" />
      </svg>
    </div>
  </div>
);

export default function App() {
  return (
    <div className={`relative flex h-[2992px] w-[1344px] flex-col overflow-hidden bg-[#fef7ff] text-[#1d1b20] ${FONT}`}>
      <StatusBar />

      <header className="grid h-[172px] grid-cols-[1fr_auto_1fr] items-center px-12">
        <MdArrowBack className="mt-[3px] size-[72px]" />
        <h1 className="text-[66px] leading-[84px]">Report Details</h1>
      </header>

      <main className="flex flex-1 flex-col px-[93px] pt-[92px] tracking-[0.75px]">
        <h2 className="text-[60px] leading-[86px] font-bold">Title: final!!!!</h2>
        <div className="mt-[47px] flex flex-col gap-[45px] text-[42px] leading-[60px]">
          <p>Description: something</p>
          <p>Landmark: ahe kuthe tari</p>
          <p>Priority: medium</p>
          <p className="font-bold">Status: pending</p>
        </div>

        <section className="relative mt-[44px] h-[900px] w-[1158px] overflow-hidden rounded-[60px] border-3 border-[#8b0e04] tracking-normal">
          <MapDrawing />
          <ZoomControls />
        </section>

        <button className="mt-[72px] h-[120px] w-[538px] rounded-full bg-[#8b0e04] text-[42px] font-medium tracking-[0.3px] text-white shadow-[0_3px_6px_rgba(0,0,0,0.35)]">
          Navigate to Location
        </button>

        <div className="mt-[93px] flex h-[101px] w-[306px] items-center justify-between border-b-2 border-[#ede7ee] pr-[21px]">
          <span className="text-[48px] leading-[72px] font-medium tracking-[0.45px]">PENDING</span>
          <svg viewBox="0 0 30 15" className="mt-1 h-[15px] w-[30px]" fill="#616161">
            <path d="M0 0H30L15 15Z" />
          </svg>
        </div>
      </main>

      <footer className="flex justify-center pb-[30px]">
        <div className="h-3 w-[324px] rounded-full bg-[#656366]" />
      </footer>

      <div className="absolute top-[52px] left-[625px] size-[94px] rounded-full bg-white shadow-[inset_0_-2px_0_#000]" />
      <Corner className="top-0 left-0" />
      <Corner className="top-0 right-0 -scale-x-100" />
      <Corner className="bottom-0 left-0 -scale-y-100" />
      <Corner className="right-0 bottom-0 -scale-100" />
    </div>
  );
}
